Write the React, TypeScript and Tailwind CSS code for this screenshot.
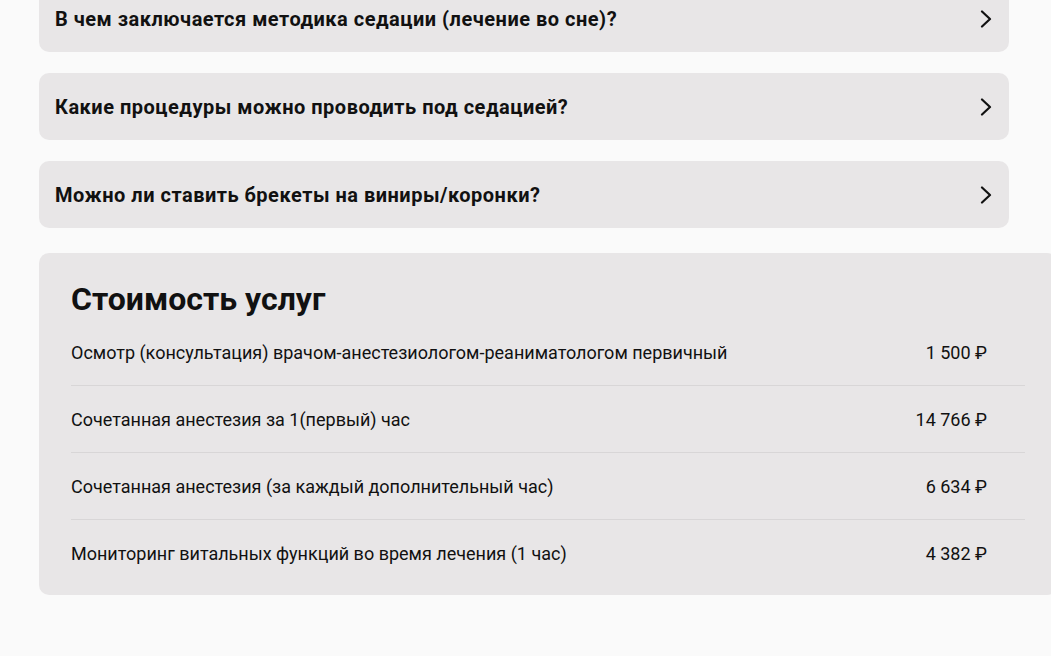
import React from "react";

const faq = [
  "В чем заключается методика седации (лечение во сне)?",
  "Какие процедуры можно проводить под седацией?",
  "Можно ли ставить брекеты на виниры/коронки?",
];

const prices = [
  { name: "Осмотр (консультация) врачом-анестезиологом-реаниматологом первичный", price: "1 500 ₽" },
  { name: "Сочетанная анестезия за 1(первый) час", price: "14 766 ₽" },
  { name: "Сочетанная анестезия (за каждый дополнительный час)", price: "6 634 ₽" },
  { name: "Мониторинг витальных функций во время лечения (1 час)", price: "4 382 ₽" },
];

function Chevron() {
  return (
    <svg width="12" height="18" viewBox="0 0 12 18" fill="none" className="shrink-0">
      <polyline points="2,1.5 10,9 2,16.5" stroke="#111" strokeWidth="2.2" strokeLinecap="round" strokeLinejoin="round" />
    </svg>
  );
}

export default function App() {
  return (
    <main
      className="h-[656px] w-full overflow-hidden bg-[#fafafa] text-[#111]"
      style={{ fontFamily: "Roboto, 'Noto Sans', sans-serif" }}
    >
      <div className="mt-[-15px] ml-[39px] flex flex-col">
        <div className="flex w-[970px] flex-col gap-[21px]">
          {faq.map((q) => (
            <div
              key={q}
              className="flex h-[67px] items-center justify-between rounded-[10px] bg-[#e8e6e7] pl-4 pr-[17px]"
            >
              <span className="text-[20px] font-bold tracking-[0.5px]">{q}</span>
              <Chevron />
            </div>
          ))}
        </div>

        <section className="mt-[25px] w-[1018px] rounded-[10px] bg-[#e8e6e7] px-8 pt-[26px] pb-[8px]">
          <h2 className="text-[32px] font-bold leading-[40px]">Стоимость услуг</h2>
          <div className="flex flex-col">
            {prices.map((p, i) => (
              <div
                key={p.name}
                className={
                  i < prices.length - 1
                    ? "flex h-[67px] items-center justify-between border-b border-[#d8d6d7] text-[18px]"
                    : "flex h-[67px] items-center justify-between text-[18px]"
                }
              >
                <span>{p.name}</span>
                <span className="pr-[38px]">{p.price}</span>
              </div>
            ))}
          </div>
        </section>
      </div>
    </main>
  );
}
